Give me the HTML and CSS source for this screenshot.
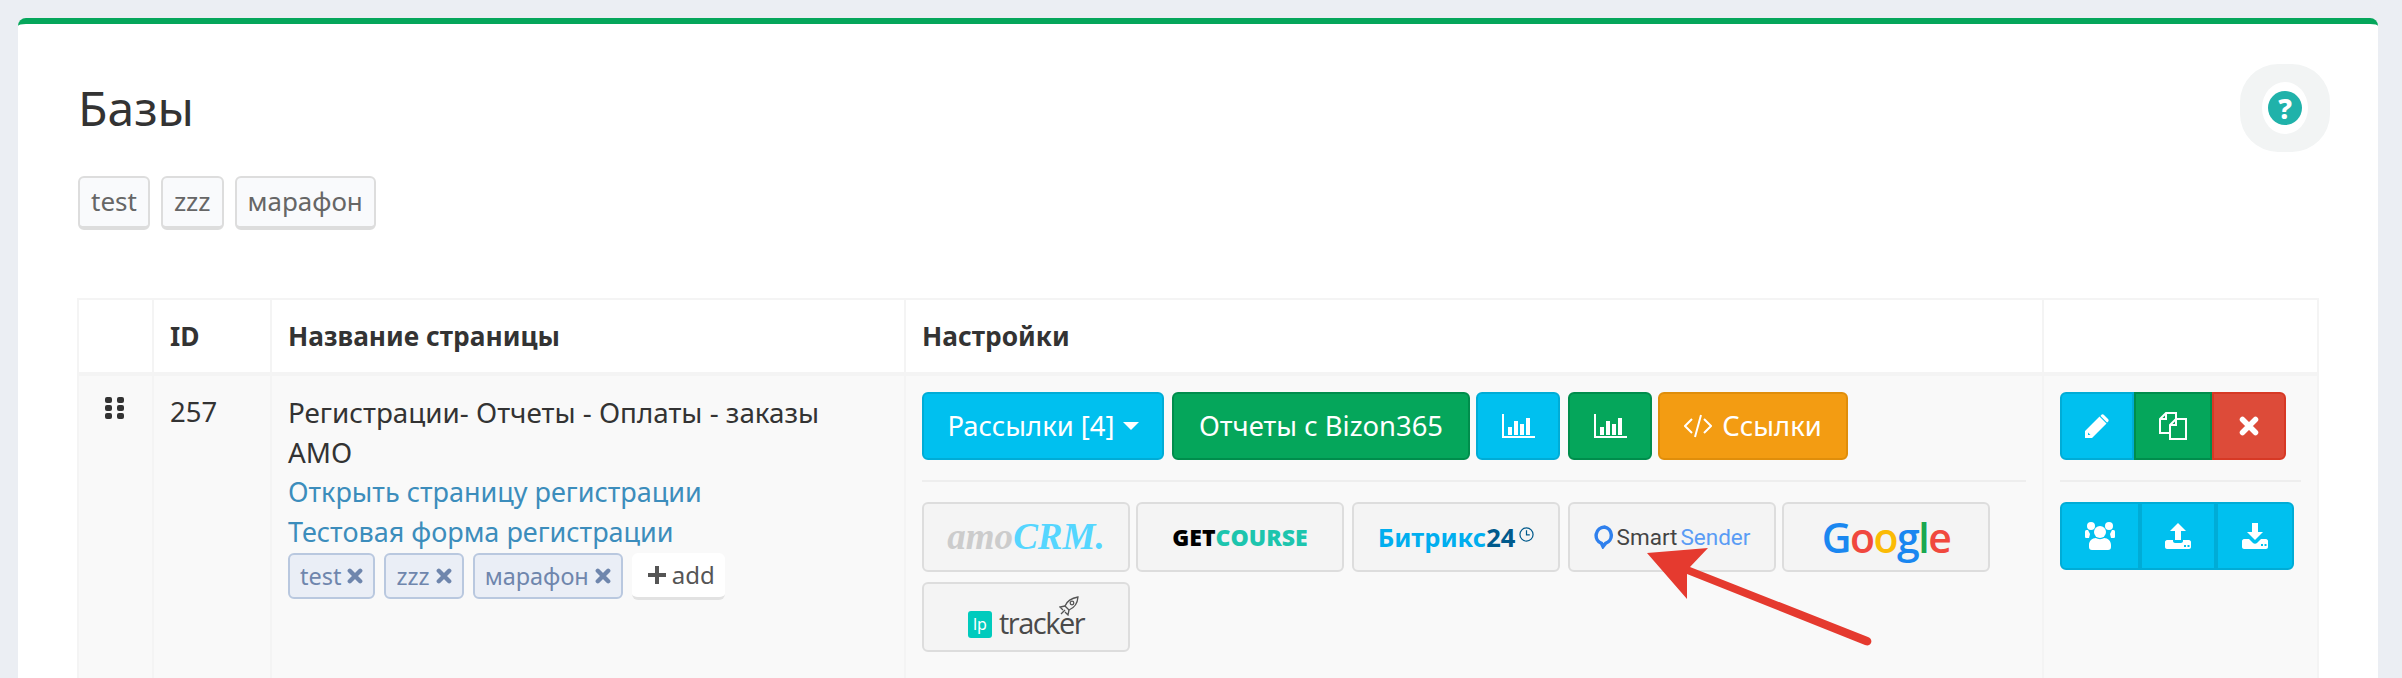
FILE: index.html
```html
<!DOCTYPE html>
<html lang="en">
<head>
  <meta charset="UTF-8" />
  <title>Базы</title>
  <link rel="stylesheet" href="styles.css">
</head>
<body>
  <!-- shared icons -->
  <svg class="sprite" xmlns="http://www.w3.org/2000/svg">
    <symbol id="i-bars" viewBox="0 0 33 24">
      <path d="M0 0h2v22h31v2H0z"/>
      <rect x="6" y="13" width="4" height="8"/><rect x="12" y="7" width="4" height="14"/>
      <rect x="18" y="10" width="4" height="11"/><rect x="24" y="4" width="4" height="17"/>
    </symbol>
    <symbol id="i-times" viewBox="0 0 20 20">
      <path d="M3.5 3.5l13 13M16.500 3.500l-13 13" stroke="currentColor" stroke-width="5.500" stroke-linecap="round" fill="none"/>
    </symbol>
    <symbol id="i-plus" viewBox="0 0 18 18">
      <path d="M7 0h4v7h7v4h-7v7H7v-7H0V7h7z"/>
    </symbol>
  </svg>

  <div class="card">
    <div class="card-head">
      <h1 class="title">Базы</h1>
      <div class="help"><div class="help-inner"><span class="help-mark">?</span></div></div>
    </div>

    <div class="filters">
      <span class="filter">test</span>
      <span class="filter">zzz</span>
      <span class="filter">марафон</span>
    </div>

    <table class="pages">
      <colgroup>
        <col class="col-drag"><col class="col-id"><col class="col-name"><col class="col-settings"><col class="col-actions">
      </colgroup>
      <thead>
        <tr>
          <th></th>
          <th>ID</th>
          <th>Название страницы</th>
          <th>Настройки</th>
          <th></th>
        </tr>
      </thead>
      <tbody>
        <tr>
          <td>
            <svg class="drag" viewBox="0 0 19 22" fill="#333">
              <rect width="7" height="6" rx="2"/><rect x="12" width="7" height="6" rx="2"/>
              <rect y="8" width="7" height="6" rx="2"/><rect x="12" y="8" width="7" height="6" rx="2"/>
              <rect y="16" width="7" height="6" rx="2"/><rect x="12" y="16" width="7" height="6" rx="2"/>
            </svg>
          </td>
          <td>257</td>
          <td>
            <div class="page-title">Регистрации- Отчеты - Оплаты - заказы АМО</div>
            <a class="page-link" href="#">Открыть страницу регистрации</a>
            <a class="page-link" href="#">Тестовая форма регистрации</a>
            <div class="tags">
              <span class="tag">test <svg class="tag-x"><use href="#i-times"/></svg></span>
              <span class="tag">zzz <svg class="tag-x"><use href="#i-times"/></svg></span>
              <span class="tag">марафон <svg class="tag-x"><use href="#i-times"/></svg></span>
              <span class="tag-add"><svg class="plus"><use href="#i-plus"/></svg>add</span>
            </div>
          </td>
          <td>
            <div class="btn-row">
              <a class="btn info btn-mail">Рассылки [4] <span class="caret"></span></a>
              <a class="btn success btn-bizon">Отчеты с Bizon365</a>
              <a class="btn info btn-chart"><svg class="bars"><use href="#i-bars"/></svg></a>
              <a class="btn success btn-chart"><svg class="bars"><use href="#i-bars"/></svg></a>
              <a class="btn warning btn-links">
                <svg class="code" viewBox="0 0 28 24" fill="none" stroke="#fff" stroke-width="2">
                  <path d="M8 5l-7 7 7 7M20 5l7 7-7 7M17 1l-6 22"/>
                </svg>
                Ссылки
              </a>
            </div>
            <hr class="sep">
            <div class="logos">
              <a class="logo"><span class="amo">amo<span class="amo-crm">CRM.</span></span></a>
              <a class="logo"><span class="getcourse">GET<span class="getcourse-b">COURSE</span></span></a>
              <a class="logo">
                <span class="bitrix">Битрикс<span class="bitrix-b">24</span></span>
                <svg class="clock" viewBox="0 0 16 16" fill="none" stroke="#005a8c" stroke-width="1.300">
                  <circle cx="8" cy="8" r="7"/><path d="M8 3.500V8.500h3.500"/>
                </svg>
              </a>
              <a class="logo">
                <svg class="pin" viewBox="0 0 21 24" fill="none" stroke="#2f80ed" stroke-width="3.500">
                  <path d="M10.500 2a8.500 8.500 0 0 0-3 16.400L9 21.500l2.500-3.100A8.500 8.500 0 0 0 10.500 2z"/>
                </svg>
                <span class="smart">Smart<span class="smart-b">Sender</span></span>
              </a>
              <a class="logo">
                <span class="google"><span class="g-blue">G</span><span class="g-red">o</span><span class="g-yellow">o</span><span class="g-blue">g</span><span class="g-green">l</span><span class="g-red">e</span></span>
              </a>
              <a class="logo">
                <span class="lp-box">lp</span>
                <span class="lp-text">tracker</span>
                <svg class="rocket" viewBox="0 0 20 20" fill="none" stroke="#555" stroke-width="1.300">
                  <path d="M6 10c2-5 7-8 13-9-.5 6-4 11-9 13z"/><circle cx="13" cy="7" r="1.800"/>
                  <path d="M6 10l-5 1 3 3M10 14l-1 5-3-3M6 14l-4 4"/>
                </svg>
              </a>
            </div>
          </td>
          <td>
            <div class="btn-group">
              <a class="btn info group-a">
                <svg class="ic-pencil" viewBox="0 0 24 24" fill="#fff">
                  <path d="M0 24v-7L14.500 2.500l7 7L7 24zM3 21h2.500L3 18.500z"/>
                  <path d="M16 1.200C17 .2 18 0 19 1l4 4c1 1 .8 2-.2 3L22 8.500 15.500 2z"/>
                </svg>
              </a>
              <a class="btn success group-b">
                <svg class="ic-copy" viewBox="0 0 28 28" fill="none" stroke="#fff" stroke-width="2">
                  <path d="M1 7l6-6h10v20H1zM7 1v6H1"/>
                  <path d="M11 13l6-6h10v20H11zM17 7v6h-6" fill="#05a65b"/>
                </svg>
              </a>
              <a class="btn danger group-a"><svg class="ic-x"><use href="#i-times"/></svg></a>
            </div>
            <hr class="sep">
            <div class="btn-group">
              <a class="btn info group-c">
                <svg class="ic-users" viewBox="0 0 30 28" fill="#fff">
                  <circle cx="6" cy="4" r="4"/><circle cx="24" cy="4" r="4"/>
                  <path d="M0 10c0-2 1-2 3-2l2 4-1 4H1c-1 0-1-1-1-2zM30 10c0-2-1-2-3-2l-2 4 1 4h3c1 0 1-1 1-2z"/>
                  <circle cx="15" cy="10" r="6"/>
                  <path d="M4 23c0-4 3-7 7-7 2 1.500 6 1.500 8 0 4 0 7 3 7 7v2c0 2-1 3-3 3H7c-2 0-3-1-3-3z"/>
                </svg>
              </a>
              <a class="btn info group-d">
                <svg class="ic-load" viewBox="0 0 26 26" fill="#fff">
                  <path d="M13 0l8 8h-5v9h-6V8H5z"/>
                  <path fill-rule="evenodd" d="M2 17h6v1c0 1 1 2 2 2h6c1 0 2-1 2-2v-1h6c1 0 2 1 2 2v5c0 1-1 2-2 2H2c-1 0-2-1-2-2v-5c0-1 1-2 2-2zm17 5v2h2v-2zm3.500 0v2h2v-2z"/>
                </svg>
              </a>
              <a class="btn info group-e">
                <svg class="ic-load" viewBox="0 0 26 26" fill="#fff">
                  <path d="M10 0h6v9h5l-8 8-8-8h5z"/>
                  <path fill-rule="evenodd" d="M2 16h5l4 4c1 1 3 1 4 0l4-4h5c1 0 2 1 2 2v6c0 1-1 2-2 2H2c-1 0-2-1-2-2v-6c0-1 1-2 2-2zm17 5v2h2v-2zm3.500 0v2h2v-2z"/>
                </svg>
              </a>
            </div>
          </td>
        </tr>
      </tbody>
    </table>
  </div>

  <!-- annotation drawn over the screenshot -->
  <svg class="arrow" viewBox="0 0 240 110" fill="#e53a2f">
    <path d="M7 15L68 10 50 29 228 99c3 1 4 4 3 6s-3 3-6 2L47 36V61z"/>
  </svg>
</body>
</html>
```

FILE: styles.css
```css
html, body {
  height: 100%;
  margin: 0;
  overflow: hidden;
}
body {
  background: #ebeef3;
  color: #333;
  font-family: "Noto Sans", "Open Sans", sans-serif;
  font-size: 27.5px;
  line-height: 40px;
}
.sprite {
  display: none;
}

.card {
  margin: 18px 24px 0 18px;
  padding: 40px 61px 0 60px;
  height: 700px;
  background: #fff;
  border-top: 6px solid #05a65b;
  border-radius: 8px 8px 0 0;
}
.card-head {
  display: flex;
  justify-content: space-between;
  align-items: center;
}
.title {
  margin: 0;
  font-size: 48px;
  font-weight: 400;
}
.help {
  display: flex;
  align-items: center;
  justify-content: center;
  width: 90px;
  height: 88px;
  margin-right: -13px;
  background: #f2f4f4;
  border-radius: 38px;
}
.help-inner {
  display: flex;
  align-items: center;
  justify-content: center;
  width: 46px;
  height: 52px;
  background: #fff;
  border-radius: 50%;
}
.help-mark {
  width: 34px;
  height: 34px;
  background: #20b2aa;
  border-radius: 50%;
  color: #fff;
  font-size: 28px;
  font-weight: 800;
  line-height: 34px;
  text-align: center;
}

.filters {
  display: flex;
  gap: 11px;
  margin-top: 24px;
}
.filter {
  padding: 0 11px;
  height: 48px;
  background: #f9fafc;
  border: 2px solid #ddd;
  border-bottom-width: 4px;
  border-radius: 6px;
  color: #666;
  font-size: 26px;
  line-height: 46px;
}

.pages {
  width: 2240px;
  margin: 68px 0 0 -1px;
  border-collapse: collapse;
  table-layout: fixed;
}
.col-drag { width: 75px; }
.col-id { width: 118px; }
.col-name { width: 634px; }
.col-settings { width: 1138px; }
.col-actions { width: 275px; }
.pages th, .pages td {
  padding: 16px;
  border: 2px solid #f4f4f4;
  text-align: left;
  vertical-align: top;
}
.pages th {
  height: 40px;
  font-size: 26.300px;
  font-weight: 700;
}
.pages thead th {
  border-bottom-width: 4px;
}
.pages td {
  height: 300px;
  background: #f9f9f9;
}
.drag {
  display: block;
  width: 19px;
  height: 22px;
  margin: 5px 0 0 10px;
}
.page-title {
  max-width: 560px;
  font-size: 27.800px;
}
.page-link {
  display: block;
  color: #3c8dbc;
  font-size: 27px;
  text-decoration: none;
}

.tags {
  display: flex;
  gap: 9px;
  margin-top: 1px;
}
.tag {
  display: flex;
  align-items: center;
  gap: 6px;
  height: 42px;
  padding: 0 10px;
  background: #eaeef6;
  border: 2px solid #b9c8df;
  border-radius: 6px;
  color: #6f86ad;
  font-size: 23.500px;
  line-height: 42px;
}
.tag-x {
  width: 16px;
  height: 18px;
  color: #6f86ad;
}
.tag-add {
  display: flex;
  align-items: center;
  gap: 6px;
  height: 44px;
  padding: 0 10px 0 16px;
  background: #fff;
  border-bottom: 3px solid #e2e2e2;
  border-radius: 6px;
  color: #555;
  font-size: 24px;
  line-height: 44px;
}
.plus {
  width: 18px;
  height: 18px;
  fill: #555;
}

.btn {
  display: flex;
  align-items: center;
  justify-content: center;
  box-sizing: border-box;
  height: 68px;
  border: 2px solid;
  border-radius: 6px;
  color: #fff;
  font-size: 27.400px;
}
.info { background: #00c0ef; border-color: #00acd6; }
.success { background: #05a65b; border-color: #008d4c; }
.warning { background: #f39c12; border-color: #e08e0b; }
.danger { background: #dd4b39; border-color: #d73925; }

.btn-row {
  display: flex;
  gap: 8px;
}
.btn-mail { width: 242px; gap: 8px; }
.btn-bizon { width: 298px; margin-right: -2px; }
.btn-chart { width: 84px; }
.btn-links { width: 190px; gap: 10px; margin-left: -2px; }
.caret {
  border-top: 8px solid #fff;
  border-left: 8px solid transparent;
  border-right: 8px solid transparent;
}
.bars {
  width: 33px;
  height: 24px;
  fill: #fff;
}
.code {
  width: 28px;
  height: 24px;
}
.sep {
  margin: 20px 0;
  height: 2px;
  background: #eee;
  border: 0;
}

.logos {
  display: flex;
  flex-wrap: wrap;
  gap: 10px 6px;
}
.logo {
  position: relative;
  display: flex;
  align-items: center;
  justify-content: center;
  box-sizing: border-box;
  width: 208px;
  height: 70px;
  background: #f4f4f4;
  border: 2px solid #ddd;
  border-radius: 6px;
}
.logos .logo:nth-child(3) { margin-left: 2px; }
.logos .logo:nth-child(4) { margin-left: 2px; }
.amo {
  font-family: "Liberation Serif", serif;
  font-size: 37px;
  font-style: italic;
  font-weight: 700;
  color: #ccc;
}
.amo-crm {
  color: #55d6ff;
}
.getcourse {
  font-family: "Open Sans", sans-serif;
  font-size: 23px;
  font-weight: 800;
  color: #000;
}
.getcourse-b {
  color: #1dc5ae;
}
.bitrix {
  font-size: 25.500px;
  font-weight: 700;
  color: #00aeef;
}
.bitrix-b {
  color: #005a8c;
}
.clock {
  width: 15px;
  height: 15px;
  margin: 0 0 6px 4px;
}
.pin {
  width: 21px;
  height: 24px;
  margin-right: 2px;
}
.smart {
  font-family: "Roboto", sans-serif;
  font-size: 22.500px;
  color: #444;
}
.smart-b {
  margin-left: 3px;
  color: #5a9cf5;
}
.google {
  font-family: "Open Sans", sans-serif;
  font-size: 41px;
  font-weight: 600;
  letter-spacing: -1.500px;
}
.g-blue { color: #1a87f0; }
.g-red { color: #f0483e; }
.g-yellow { color: #fbbb05; }
.g-green { color: #1aa850; }
.lp-box {
  width: 24px;
  height: 27px;
  margin: 15px 7px 0 0;
  background: #00cbbd;
  border-radius: 3px;
  color: #fff;
  font-size: 16px;
  line-height: 26px;
  text-align: center;
}
.lp-text {
  margin-top: 12px;
  font-family: "Open Sans", sans-serif;
  font-size: 29px;
  letter-spacing: -1.500px;
  color: #4a4a4a;
}
.rocket {
  position: absolute;
  left: 135px;
  top: 12px;
  width: 20px;
  height: 20px;
}

.btn-group {
  display: flex;
}
.btn-group .btn {
  border-radius: 0;
}
.btn-group .btn:first-child {
  border-radius: 6px 0 0 6px;
}
.btn-group .btn:last-child {
  border-radius: 0 6px 6px 0;
}
.group-a { width: 74px; }
.group-b { width: 78px; }
.group-c { width: 80px; }
.group-d { width: 76px; }
.group-e { width: 78px; }
.ic-pencil { width: 24px; height: 24px; }
.ic-copy { width: 28px; height: 28px; }
.ic-x { width: 20px; height: 20px; color: #fff; }
.ic-users { width: 30px; height: 28px; }
.ic-load { width: 26px; height: 26px; }

.arrow {
  position: absolute;
  left: 1640px;
  top: 538px;
  width: 240px;
  height: 110px;
}
```
